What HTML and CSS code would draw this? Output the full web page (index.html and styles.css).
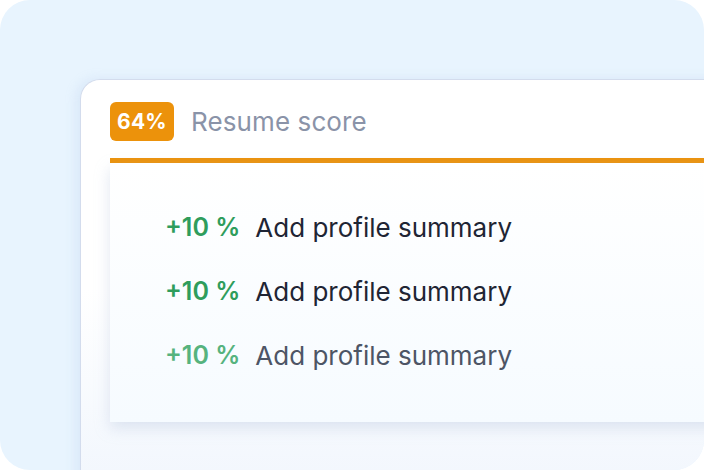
FILE: index.html
```html
<!DOCTYPE html>
<html>
<head>
<meta charset="utf-8">
<link rel="stylesheet" href="styles.css">
</head>
<body>
<div class="frame">
  <div class="card">
    <div class="header">
      <span class="badge">64%</span>
      <span class="title">Resume score</span>
    </div>
    <div class="bar"></div>
    <div class="panel">
      <div class="row"><span class="gain">+10 %</span><span class="label">Add profile summary</span></div>
      <div class="row"><span class="gain">+10 %</span><span class="label">Add profile summary</span></div>
      <div class="row faded"><span class="gain">+10 %</span><span class="label">Add profile summary</span></div>
    </div>
  </div>
</div>
</body>
</html>
```
FILE: styles.css
```css
html, body {
  margin: 0;
  padding: 0;
  background: #ffffff;
}
.frame {
  width: 704px;
  height: 470px;
  border-radius: 30px;
  background: #e8f4fe;
  overflow: hidden;
  padding-top: 79px;
  padding-left: 80px;
  box-sizing: border-box;
  font-family: Inter, "Open Sans", sans-serif;
}
.card {
  width: 660px;
  height: 420px;
  background: linear-gradient(180deg, #ffffff 0%, #ffffff 50%, #f1f6fd 100%);
  border: 1px solid #d3dced;
  border-right: none;
  border-radius: 20px 0 0 0;
  box-shadow: -4px 0 12px rgba(150, 180, 220, 0.18);
  padding-left: 29px;
  box-sizing: border-box;
}
.header {
  display: flex;
  align-items: center;
  height: 39px;
  margin-top: 22px;
  gap: 17px;
}
.badge {
  display: flex;
  align-items: center;
  justify-content: center;
  width: 64px;
  height: 39px;
  border-radius: 6px;
  background: #ec920b;
  color: #ffffff;
  font-weight: 700;
  font-size: 21px;
  letter-spacing: 0.2px;
}
.title {
  font-size: 26px;
  color: #8a93a8;
  font-weight: 400;
  letter-spacing: 0.1px;
}
.bar {
  margin-top: 17px;
  height: 5px;
  background: #ec920b;
}
.panel {
  height: 259px;
  box-sizing: border-box;
  padding: 32px 0 0 55px;
  background: linear-gradient(180deg, #ffffff 0%, #f6fbff 100%);
  box-shadow: 0 6px 14px rgba(170, 185, 215, 0.35);
}
.row {
  display: flex;
  align-items: center;
  height: 64px;
  gap: 15px;
  font-size: 26px;
}
.gain {
  color: #2f9d5c;
  font-weight: 600;
  font-size: 25px;
}
.label {
  color: #1f2534;
}
.faded .gain {
  color: #56b37e;
}
.faded .label {
  color: #4d5565;
}
```
